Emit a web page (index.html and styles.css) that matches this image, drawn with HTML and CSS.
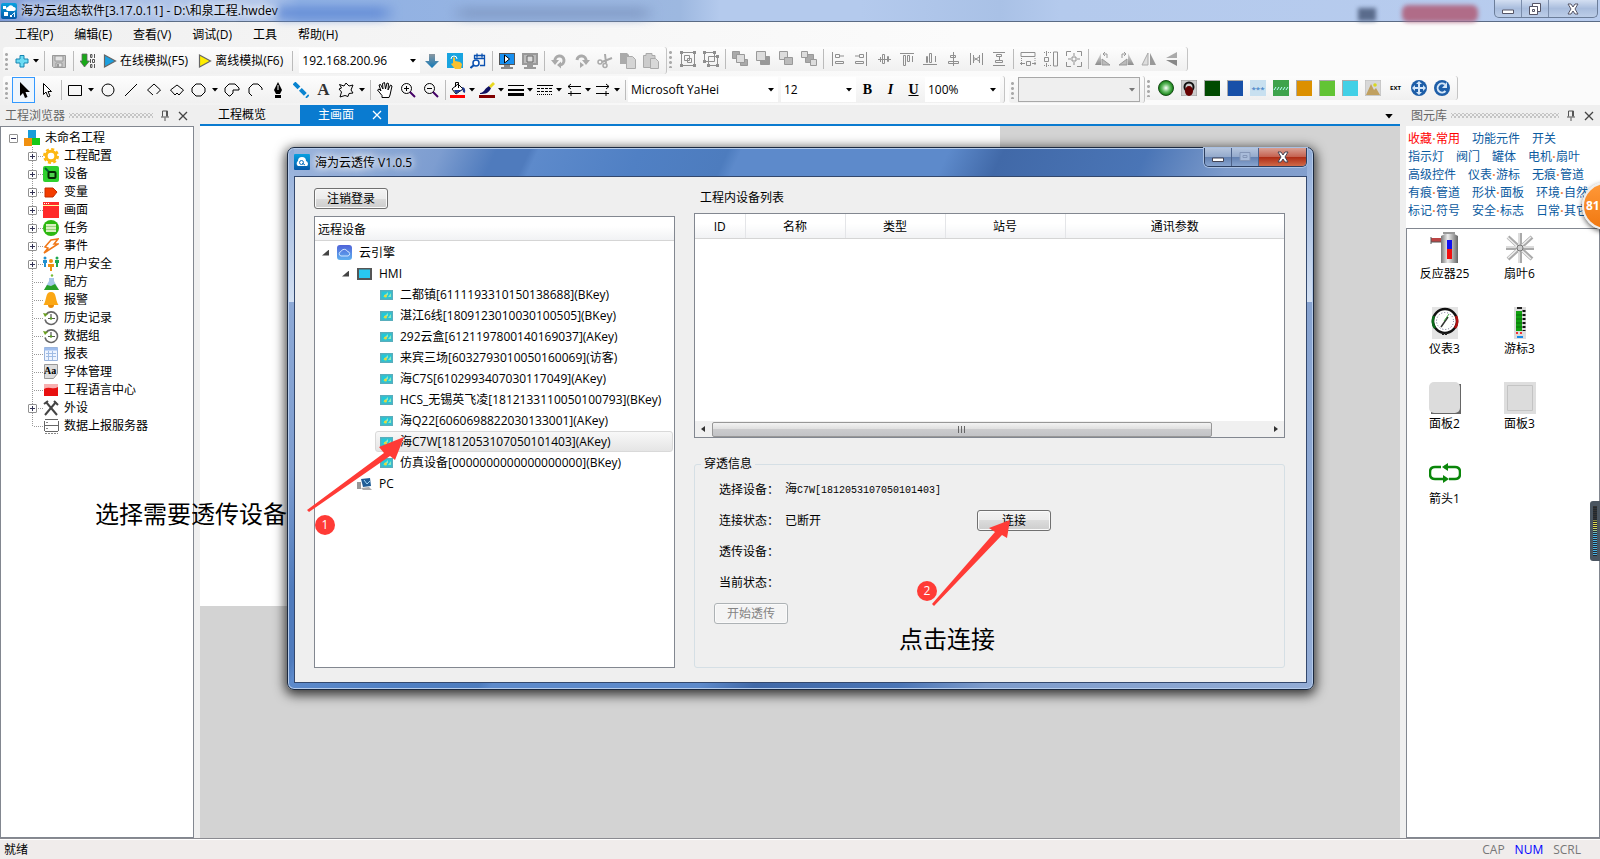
FILE: index.html
```html
<!DOCTYPE html>
<html lang="zh-CN">
<head>
<meta charset="utf-8">
<title>海为云组态软件</title>
<link rel="stylesheet" href="styles.css">
</head>
<body>
<svg class="defs" aria-hidden="true">
  <defs>
    <linearGradient id="gSteel" x1="0" x2="1"><stop offset="0" stop-color="#777"/><stop offset=".4" stop-color="#eee"/><stop offset="1" stop-color="#666"/></linearGradient>
    <linearGradient id="gGrey" x1="0" y1="0" x2="0" y2="1"><stop offset="0" stop-color="#ddd"/><stop offset="1" stop-color="#8c8c8c"/></linearGradient>
    <linearGradient id="gDown" x1="0" y1="0" x2="0" y2="1"><stop offset="0" stop-color="#8a97a0"/><stop offset="1" stop-color="#0f78b8"/></linearGradient>
    <linearGradient id="gBlue" x1="0" y1="0" x2="0" y2="1"><stop offset="0" stop-color="#08a0e0"/><stop offset="1" stop-color="#0558a8"/></linearGradient>
    <linearGradient id="gCloud" x1="0" y1="0" x2="0" y2="1"><stop offset="0" stop-color="#4f63d8"/><stop offset="1" stop-color="#5fb0f0"/></linearGradient>
    <radialGradient id="gLamp"><stop offset="0" stop-color="#fff"/><stop offset=".5" stop-color="#6cc06c"/><stop offset="1" stop-color="#0a7a0a"/></radialGradient>
  </defs>
  <symbol id="caret" viewBox="0 0 6 4"><path d="M0 0h6L3 3.5z" fill="currentColor"/></symbol>
  <symbol id="pin" viewBox="0 0 10 12"><path d="M2.500 6.500V1h5v5.500M6.500 1v5.500M1 7h8M5 7.500V11" fill="none" stroke="#555" stroke-width="1"/></symbol>
  <symbol id="close" viewBox="0 0 10 10"><path d="M1 1l8 8M9 1L1 9" stroke="currentColor" stroke-width="1.300"/></symbol>
  <symbol id="play" viewBox="0 0 16 16"><path d="M2.500 2l11 6-11 6z" fill="currentColor" stroke="#666" stroke-width="1.200"/></symbol>
  <symbol id="clock" viewBox="0 0 16 16"><path d="M3 4.500A6.300 6.300 0 1 1 2 9.500" fill="none" stroke="#666" stroke-width="1.600"/><path d="M0 3l2 4 3-3z" fill="#6aa020"/><path d="M8 4v5M5 8.500h7" stroke="#555" stroke-width="1.200"/><circle cx="8" cy="8.500" r="1.200" fill="#5aa020"/></symbol>
  <symbol id="device" viewBox="0 0 13 10"><path fill="#58aebc" d="M0 0h13v10H0z"/><path fill="#22c8d8" d="M1.500 1.500h10v7h-10z"/><path d="M3 7l5-5v3zM8 7l3-4v4z" fill="#8fe8c0"/><circle cx="5.500" cy="6" r="1.500" fill="#e8d83c"/></symbol>
</svg>

<div class="app">
  <header class="titlebar">
    <svg class="app-logo" viewBox="0 0 16 16"><rect width="16" height="16" rx="2" fill="url(#gBlue)"/><path fill="#fff" d="M7 8a2 2 0 0 1 0-4 3 3 0 0 1 5.500 0A2 2 0 0 1 13 8zM2 3h3v3H2zM3 9h4v4H3zM9 12h2v2H9z"/><path d="M11 12l2.500-2.500V14" fill="none" stroke="#dff2ff"/></svg>
    <h1 class="title-text">海为云组态软件[3.17.0.11] - D:\和泉工程.hwdev</h1>
    <span class="glass-tabs"></span><span class="glass-dark"></span><span class="glass-red"></span>
    <div class="win-buttons">
      <button aria-label="最小化"><svg width="12" height="12" viewBox="0 0 12 12"><path d="M.5 7h11v3.500H.5z" fill="#fff" stroke="#556"/></svg></button>
      <button aria-label="还原"><svg width="12" height="12" viewBox="0 0 12 12"><path d="M3.500.5h8v8h-3v-5h-5z" fill="#fff" stroke="#556"/><path d="M.5 3.500h8v8h-8zM3.500 6.500h2v2h-2z" fill="#fff" stroke="#556"/></svg></button>
      <button aria-label="关闭" class="wide"><svg width="12" height="12" viewBox="0 0 12 12"><path d="M1 1h3l2 3 2-3h3L8 6l3 5H8L6 8l-2 3H1l3-5z" fill="#fff" stroke="#556"/></svg></button>
    </div>
  </header>

  <nav class="menubar">
    <button>工程(P)</button><button>编辑(E)</button><button>查看(V)</button><button>调试(D)</button><button>工具</button><button>帮助(H)</button>
  </nav>

  <div class="toolrow">
    <div class="toolbar" role="toolbar" aria-label="标准">
      <i class="grip"></i>
      <button class="tb drop-s" aria-label="新建"><svg class="ic" viewBox="0 0 16 16"><path d="M6 2.500h4V6h4v4h-4v4H6v-4H2V6h4z" fill="#6cdcf4" stroke="#1784b0"/></svg><svg class="car"><use href="#caret"/></svg></button>
      <i class="sep"></i>
      <button class="tb" aria-label="保存"><svg class="ic" viewBox="0 0 16 16"><path d="M1.500 2.500h13v12h-12l-1-1z" fill="#c4c4c4" stroke="#999"/><path d="M4 3h8v5H4zM5 10h6v4H5z" fill="#e4e4e4" stroke="#999"/><path d="M6 11h2v3H6z" fill="#999"/></svg></button>
      <i class="sep"></i>
      <button class="tb" aria-label="下载编译"><svg class="ic" viewBox="0 0 16 16"><path d="M2 1h5v7h2.500L4.500 14 0 8h2z" fill="#18a818" stroke="#666" stroke-width=".8"/><path d="M10.500 1.500v3h1.500v-3zM14.500 1v4M10.500 6v4M12.500 6.500v3h2v-3zM10.500 11.500v3h1.500v-3zM14.500 11v4" stroke="#555" fill="none"/></svg></button>
      <button class="tb text"><svg class="ic play-b"><use href="#play"/></svg>在线模拟(F5)</button>
      <button class="tb text"><svg class="ic play-y"><use href="#play"/></svg>离线模拟(F6)</button>
      <i class="sep"></i>
      <span class="combo ip"><select aria-label="地址"><option>192.168.200.96</option></select><svg class="car"><use href="#caret"/></svg></span>
      <button class="tb" aria-label="下载"><svg class="ic" viewBox="0 0 16 16"><path d="M5 1h6v7h4l-7 7-7-7h4z" fill="url(#gDown)"/></svg></button>
      <button class="tb" aria-label="触摸"><svg class="ic" viewBox="0 0 16 16"><path fill="#18a4e0" d="M0 0h16v15H0z"/><path d="M6 4.500h2V8l5 1 2 2-1 5H8l-4-5 1.500-1L6 11z" fill="#f8c030"/><path d="M4 6a3 3 0 1 1 6 0" fill="none" stroke="#fff"/></svg></button>
      <button class="tb" aria-label="日程"><svg class="ic" viewBox="0 0 16 16"><path d="M4.500 6V2.500h10v10H10M4.500 5.500h10M7 .5v4M12 .5v4" fill="none" stroke="#0a50b0" stroke-width="1.300"/><circle cx="6" cy="10" r="3" fill="#fff" stroke="#0a50b0" stroke-width="1.500"/><path d="M4 12l-3.500 3" stroke="#0a50b0" stroke-width="2"/></svg></button>
      <i class="sep"></i>
      <button class="tb" aria-label="运行"><svg class="ic" viewBox="0 0 16 16"><path d="M0 0h16v12H0z" fill="#555"/><path d="M1 1h14v10H1z" fill="#1890f0"/><path d="M5.500 2l5 4-5 4z" fill="#fff" stroke="#000"/><path d="M5 12h6v2h3v2H2v-2h3z" fill="#888"/></svg></button>
      <button class="tb" aria-label="停止"><svg class="ic" viewBox="0 0 16 16"><path d="M0 0h16v12H0zM5 12h6v2h3v2H2v-2h3z" fill="#999"/><path d="M2 2h12v8H2z" fill="#bbb"/><path d="M5 3h6v6H5z" fill="#ddd" stroke="#666"/></svg></button>
      <i class="sep"></i>
      <button class="tb" aria-label="撤销"><svg class="ic" viewBox="0 0 16 16"><path d="M4 8a4.500 4.500 0 1 1 5 4" fill="none" stroke="#aaa" stroke-width="3"/><path d="M0 7h8l-4 5zM10 8.500v7L6 12z" fill="#aaa"/></svg></button>
      <button class="tb" aria-label="重做"><svg class="ic" viewBox="0 0 16 16"><path d="M12 8a4.500 4.500 0 1 0-9-1" fill="none" stroke="#aaa" stroke-width="3"/><path d="M16 7H8l4 5zM6 9v6l4-3z" fill="#aaa"/></svg></button>
      <button class="tb" aria-label="剪切"><svg class="ic" viewBox="0 0 16 16"><path d="M8 1l1 9M15 5L5 9" stroke="#aaa" stroke-width="2"/><circle cx="3" cy="9" r="2" fill="none" stroke="#aaa" stroke-width="1.500"/><circle cx="8" cy="12.500" r="2" fill="none" stroke="#aaa" stroke-width="1.500"/></svg></button>
      <button class="tb" aria-label="复制"><svg class="ic" viewBox="0 0 16 16"><path d="M0 0h7l2 2v9H0z" fill="#aaa"/><path d="M6.500 3.500h6l3 3v9h-9z" fill="#d4d4d4" stroke="#aaa"/></svg></button>
      <button class="tb" aria-label="粘贴"><svg class="ic" viewBox="0 0 16 16"><path d="M.5 2.500H3V.5h6v2h3v12H.5z" fill="#ccc" stroke="#aaa"/><path d="M7.500 5.500h5l3 3v7h-8z" fill="#d8d8d8" stroke="#aaa"/></svg></button>
    </div>
    <div class="toolbar raised" role="toolbar" aria-label="排列">
      <i class="grip"></i>
      <button class="tb" aria-label="组合"><svg class="ic ln" viewBox="0 0 16 16"><path d="M1.500 1.500h13v13h-13zM4.500 4.500h5v5h-5zM7.500 7.500h4v4h-4z"/><path class="fl" d="M0 0h3v3H0zM13 0h3v3h-3zM0 13h3v3H0zM13 13h3v3h-3z"/></svg></button>
      <button class="tb" aria-label="取消组合"><svg class="ic ln" viewBox="0 0 16 16"><path d="M1.500 1.500h10v9h-10zM5.500 5.500h9v9h-9z"/><path class="fl" d="M0 0h3v3H0zM10 0h3v3h-3zM0 9h3v3H0zM13 13h3v3h-3zM13 4h3v3h-3zM4 13h3v3H4z"/></svg></button>
      <i class="sep"></i>
      <button class="tb" aria-label="置顶"><svg class="ic" viewBox="0 0 16 16"><g stroke="#999"><path d="M.5.5h7v7h-7zM8.500 8.500h7v6h-7z" fill="#aaa"/><path d="M4.500 3.500h8v8h-8z" fill="#ddd"/></g></svg></button>
      <button class="tb" aria-label="上移"><svg class="ic" viewBox="0 0 16 16"><g stroke="#999"><path d="M5.500 5.500h9v8h-9z" fill="#999"/><path d="M1.500.5h9v9h-9z" fill="#ddd"/></g></svg></button>
      <button class="tb" aria-label="下移"><svg class="ic" viewBox="0 0 16 16"><g stroke="#999"><path d="M1.500.5h8v8h-8z" fill="#ddd"/><path d="M6.500 6.500h8v7h-8z" fill="#bbb"/></g></svg></button>
      <button class="tb" aria-label="置底"><svg class="ic" viewBox="0 0 16 16"><g stroke="#999"><path d="M4.500 3.500h8v8h-8z" fill="#aaa"/><path d="M.5.5h6v6h-6zM9.500 8.500h6v6h-6z" fill="#ddd"/></g></svg></button>
      <i class="sep"></i>
      <button class="tb" aria-label="左对齐"><svg class="ic ln" viewBox="0 0 16 16"><path d="M2.500 1v14M5.500 3.500h4v3h-4zM5.500 10.500h8v2h-8zM10 5h4"/></svg></button>
      <button class="tb" aria-label="右对齐"><svg class="ic ln" viewBox="0 0 16 16"><path d="M13.500 1v14M6.500 3.500h4v3h-4zM2.500 10.500h8v2h-8zM2 5h4"/></svg></button>
      <button class="tb" aria-label="水平居中"><svg class="ic ln" viewBox="0 0 16 16"><path d="M2 8.500h13M4.500 6v5M6.500 3.500h2v9h-2zM11.500 5.500h1v5h-1z"/></svg></button>
      <button class="tb" aria-label="顶对齐"><svg class="ic ln" viewBox="0 0 16 16"><path d="M1 2.500h14M4.500 4.500h2v10h-2zM8.500 4.500h2v6h-2zM13.500 5v6"/></svg></button>
      <button class="tb" aria-label="底对齐"><svg class="ic ln" viewBox="0 0 16 16"><path d="M1 13.500h14M4.500 5.500h1v6h-1zM7.500 2.500h2v9h-2zM13.500 5v6"/></svg></button>
      <button class="tb" aria-label="垂直居中"><svg class="ic ln" viewBox="0 0 16 16"><path d="M8.500 1v14M5.500 4.500h5v2h-5zM3.500 10.500h10v2h-10z"/></svg></button>
      <button class="tb" aria-label="横向等距"><svg class="ic ln" viewBox="0 0 16 16"><path d="M2.500 2v12M14.500 2v12M5.500 4v8M11.500 4v8M5 6l6 4M11 6l-6 4"/></svg></button>
      <button class="tb" aria-label="纵向等距"><svg class="ic ln" viewBox="0 0 16 16"><path d="M2 1.500h12M2 14.500h12M5.500 3.500h5v2h-5zM4.500 9.500h7v2h-7zM8.500 6v3"/></svg></button>
      <i class="sep"></i>
      <button class="tb" aria-label="同宽"><svg class="ic ln" viewBox="0 0 16 16"><path d="M1 1.500h14v4H1zM6.500 10.500h4v4h-4zM0 12.500h5M12 12.500h4"/><path d="M1.500 7v7M15 7v7" stroke-dasharray="1 1"/></svg></button>
      <button class="tb" aria-label="同高"><svg class="ic ln" viewBox="0 0 16 16"><path d="M10.500 1h4v14h-4zM1.500 6.500h4v4h-4zM3.500 0v5M3.500 12v4"/><path d="M1 1.500h8M1 14.500h8" stroke-dasharray="1 1"/></svg></button>
      <button class="tb" aria-label="同大小"><svg class="ic ln" viewBox="0 0 16 16"><path d="M.5 5V.5H5M11 .5h4.500V5M15.500 11v4.500H11M5 15.500H.5V11M6 6h4v4H6zM8 2v3M8 11v3M2 8h3M11 8h3"/></svg></button>
      <i class="sep"></i>
      <button class="tb" aria-label="左旋"><svg class="ic" viewBox="0 0 16 16"><path d="M0 14L6 2v12z" fill="url(#gGrey)"/><path d="M7 8l8 6H7z" fill="#bbb" stroke="#999"/><path d="M8 3h4v4M10 1L8 3l2 2" fill="none" stroke="#999"/></svg></button>
      <button class="tb" aria-label="右旋"><svg class="ic" viewBox="0 0 16 16"><path d="M16 14L10 2v12z" fill="url(#gGrey)"/><path d="M9 8l-8 6h8z" fill="#bbb" stroke="#999"/><path d="M8 3H4v4M6 1l2 2-2 2" fill="none" stroke="#999"/></svg></button>
      <button class="tb" aria-label="水平翻转"><svg class="ic" viewBox="0 0 16 16"><path d="M1 14L7 2v12z" fill="#ddd" stroke="#aaa"/><path d="M15 14L9 2v12z" fill="#999"/></svg></button>
      <button class="tb" aria-label="垂直翻转"><svg class="ic" viewBox="0 0 16 16"><path d="M13 1v6L2 7z" fill="#aaa"/><path d="M13 15V9H2z" fill="#888"/></svg></button>
    </div>
  </div>

  <div class="toolrow">
    <div class="toolbar" role="toolbar" aria-label="绘图">
      <i class="grip"></i>
      <button class="tb on" aria-label="选择"><svg class="ic" viewBox="0 0 16 16"><path d="M4 0v14l3-3 2 5 2.500-1-2-5H14z"/></svg></button>
      <button class="tb" aria-label="直接选择"><svg class="ic" viewBox="0 0 16 16"><path d="M4.500 1.500v11l2.500-2.500 2 5 2-1-2-4.500h3.500z" fill="#fff" stroke="#000"/></svg></button>
      <i class="sep"></i>
      <button class="tb drop" aria-label="矩形"><svg class="ic bk" viewBox="0 0 16 16"><path d="M1.500 3.500h13v10h-13z"/></svg><svg class="car"><use href="#caret"/></svg></button>
      <button class="tb" aria-label="圆"><svg class="ic bk" viewBox="0 0 16 16"><circle cx="8" cy="8" r="6"/></svg></button>
      <button class="tb" aria-label="直线"><svg class="ic bk" viewBox="0 0 16 16"><path d="M2 14L14 2"/></svg></button>
      <button class="tb" aria-label="折线"><svg class="ic bk" viewBox="0 0 16 16"><path d="M7 13L1.500 8 8 2l6.500 6-4 4"/></svg></button>
      <button class="tb" aria-label="多边形"><svg class="ic bk" viewBox="0 0 16 16"><path d="M8 3l6.500 5-4.500 5-2-2-2 2-4.500-5z"/></svg></button>
      <button class="tb drop" aria-label="八边形"><svg class="ic bk" viewBox="0 0 16 16"><path d="M5 2h5l4 4v4l-4 4H5l-4-4V6z"/></svg><svg class="car"><use href="#caret"/></svg></button>
      <button class="tb" aria-label="扇形"><svg class="ic bk" viewBox="0 0 16 16"><path d="M5 14L1 10V6l4-4h6l4 4v2H9v3l-3 3z"/></svg></button>
      <button class="tb" aria-label="弧"><svg class="ic bk" viewBox="0 0 16 16"><path d="M5 14l-3-3V6l4-4h5l4 4v2"/></svg></button>
      <button class="tb" aria-label="钢笔"><svg class="ic" viewBox="0 0 16 16"><path d="M8 0l4 8-2 4H6L4 8zM5 13h6v3H5z"/><path d="M8 3v5" stroke="#fff"/></svg></button>
      <button class="tb" aria-label="管道"><svg class="ic" viewBox="0 0 16 16"><path d="M1 1l14 14" stroke="#0a84d0" stroke-width="4" stroke-dasharray="7 2"/></svg></button>
      <button class="tb glyph a">A</button>
      <button class="tb drop" aria-label="星形"><svg class="ic bk" viewBox="0 0 16 16"><path d="M1.500 2.500L6 4l2-3 3 3 4-1-2 5 2 3-4 .5-1 3-3-1-5 1.500L3.500 10 1 7l2.500-1z"/></svg><svg class="car"><use href="#caret"/></svg></button>
      <i class="sep"></i>
      <button class="tb" aria-label="平移"><svg class="ic bk" viewBox="0 0 16 16"><path d="M5 15.500v-2L.5 8 2 7l2 2-2-6 1.500-.5L6 7 5.500 1.500 7.500.5 8.500 7l1.500-6 1.500.5L11 8l2.500-5 1.500 1-2 9-1 2.500z" fill="#fff"/></svg></button>
      <button class="tb" aria-label="放大"><svg class="ic bk" viewBox="0 0 16 16"><circle cx="6.500" cy="6.500" r="5"/><path d="M4 6.500h5M6.500 4v5"/><path d="M10 10l5 5" stroke="#406" stroke-width="2"/></svg></button>
      <button class="tb" aria-label="缩小"><svg class="ic bk" viewBox="0 0 16 16"><circle cx="6.500" cy="6.500" r="5"/><path d="M4 6.500h5"/><path d="M10 10l5 5" stroke="#406" stroke-width="2"/></svg></button>
      <i class="sep"></i>
      <button class="tb drop-s" aria-label="填充色"><svg class="ic" viewBox="0 0 16 16"><path d="M2 7l6-5 5 5-7 5z" fill="#fff" stroke="#000"/><path d="M4 8h8l-6 4zM12 5q4 0 3 6l-2-1z" fill="#223a90"/><path d="M5.500 5V.5h3V6" fill="none" stroke="#000"/><path d="M0 13h15v3H0z" fill="#f00"/></svg><svg class="car"><use href="#caret"/></svg></button>
      <button class="tb drop-s" aria-label="线条色"><svg class="ic" viewBox="0 0 16 16"><path d="M1 11c4 0 4-4 9-7l2 2c-2 5-5 6-11 6z" fill="#101060"/><path d="M10 4l4-4 2 2-4 4z" fill="#e8d820"/><path d="M0 13h16v3H0z" fill="#800000"/></svg><svg class="car"><use href="#caret"/></svg></button>
      <button class="tb drop-s" aria-label="线宽"><svg class="ic" viewBox="0 0 16 16"><path d="M0 3h16v1H0zM0 7h16v2H0zM0 11h16v3H0z"/></svg><svg class="car"><use href="#caret"/></svg></button>
      <button class="tb drop-s" aria-label="线型"><svg class="ic bk" viewBox="0 0 16 16"><path d="M0 3.500h16"/><path d="M0 6.500h16M0 9.500h16" stroke-dasharray="3 1"/><path d="M0 12.500h16" stroke-dasharray="1 1"/></svg><svg class="car"><use href="#caret"/></svg></button>
      <button class="tb drop-s" aria-label="起点箭头"><svg class="ic bk" viewBox="0 0 16 16"><path d="M2 4.500h13M5 2L2 4.500 5 7M2 11.500h13M5 9v5"/></svg><svg class="car"><use href="#caret"/></svg></button>
      <button class="tb drop-s" aria-label="终点箭头"><svg class="ic bk" viewBox="0 0 16 16"><path d="M1 4.500h13M11 2l3 2.500L11 7M1 11.500h13M11 9v5"/></svg><svg class="car"><use href="#caret"/></svg></button>
      <i class="sep"></i>
      <span class="combo font"><select aria-label="字体"><option>Microsoft YaHei</option></select><svg class="car"><use href="#caret"/></svg></span>
      <span class="combo size"><select aria-label="字号"><option>12</option></select><svg class="car"><use href="#caret"/></svg></span>
      <button class="tb glyph">B</button>
      <button class="tb glyph i">I</button>
      <button class="tb glyph u">U</button>
      <span class="combo size"><select aria-label="缩放"><option>100%</option></select><svg class="car"><use href="#caret"/></svg></span>
    </div>
    <div class="toolbar states" role="toolbar" aria-label="状态">
      <i class="grip"></i>
      <span class="combo state"><select aria-label="状态"><option></option></select><svg class="car"><use href="#caret"/></svg></span>
    </div>
    <div class="toolbar raised" role="toolbar" aria-label="图元">
      <i class="grip"></i>
      <button class="tb" aria-label="指示灯"><svg class="ic" viewBox="0 0 16 16"><circle cx="8" cy="8" r="7.500" fill="url(#gLamp)" stroke="#1b4d1b"/></svg></button>
      <button class="tb" aria-label="开关"><svg class="ic" viewBox="0 0 16 16"><path d="M0 0h16v16H0z" fill="#ccc" stroke="#999"/><circle cx="8" cy="7" r="4.500" fill="none" stroke="#111" stroke-width="2"/><ellipse cx="8" cy="11" rx="4" ry="5" fill="#600"/></svg></button>
      <button class="tb" aria-label="按钮"><span class="sw c1"></span></button>
      <button class="tb" aria-label="多态"><span class="sw c2"></span></button>
      <button class="tb" aria-label="数值"><span class="sw c3">***</span></button>
      <button class="tb" aria-label="趋势"><svg class="ic" viewBox="0 0 16 16"><path d="M0 0h16v16H0z" fill="#3ea34c"/><path d="M1 10l2-3M4 10l2-3M7 10l2-3M10 10l2-3M13 10l2-3" stroke="#bff"/></svg></button>
      <button class="tb" aria-label="报警条"><span class="sw c4"></span></button>
      <button class="tb" aria-label="配方"><span class="sw c5"></span></button>
      <button class="tb" aria-label="表格"><span class="sw c6"></span></button>
      <button class="tb" aria-label="图片"><svg class="ic" viewBox="0 0 16 16"><path d="M0 0h16v16H0z" fill="#d8d8d8" stroke="#bbb"/><path d="M1 15L6 4l3 6 2-2 4 7z" fill="#c0a060"/><circle cx="10" cy="5" r="1.800" fill="#d8d820"/></svg></button>
      <button class="tb tiny">EXT</button>
      <button class="tb" aria-label="移动"><svg class="ic" viewBox="0 0 16 16"><circle cx="8" cy="8" r="8" fill="#1d5ea8"/><path d="M8 1l3 3H9v3h3V5l3 3-3 3V9H9v3h2l-3 3-3-3h2V9H4v2L1 8l3-3v2h3V4H5z" fill="#d4e6f8"/></svg></button>
      <button class="tb" aria-label="旋转"><svg class="ic" viewBox="0 0 16 16"><circle cx="8" cy="8" r="8" fill="#1d5ea8"/><path d="M11.500 11A4.500 4.500 0 1 1 11 4.500" fill="none" stroke="#d4e6f8" stroke-width="2"/><path d="M13 2v6H8z" fill="#d4e6f8"/></svg></button>
    </div>
  </div>

  <main class="main">
    <aside class="dock">
      <div class="dock-head"><h2>工程浏览器</h2><i class="dots"></i><button aria-label="固定"><svg width="10" height="12"><use href="#pin"/></svg></button><button aria-label="关闭"><svg width="10" height="10"><use href="#close"/></svg></button></div>
      <div class="box">
        <ul class="tree">
          <li class="root"><i class="exp minus"></i><svg viewBox="0 0 16 16"><path d="M4 0h8v8H4z" fill="#189cd8"/><path d="M0 8h8v8H0z" fill="#f09010"/><path d="M8 8h8v7H8z" fill="#18c818"/></svg><span>未命名工程</span></li>
          <li><i class="exp"></i><svg viewBox="0 0 16 16"><circle cx="8" cy="8" r="6.800" fill="none" stroke="#fdb813" stroke-width="2.400" stroke-dasharray="3 2.340"/><circle cx="8" cy="8" r="4.800" fill="none" stroke="#fdb813" stroke-width="3"/></svg><span>工程配置</span></li>
          <li><i class="exp"></i><svg viewBox="0 0 16 16"><rect width="16" height="16" rx="2" fill="#2ed02e"/><path d="M2 2l4 4" stroke="#063" stroke-width="2"/><rect x="5.500" y="6" width="7" height="6" rx="1" fill="#4fd04f" stroke="#052b05" stroke-width="2"/></svg><span>设备</span></li>
          <li><i class="exp"></i><svg viewBox="0 0 16 16"><path d="M2 4h8l4 4-4 5H2z" fill="#f33c00" stroke="#c62c00"/></svg><span>变量</span></li>
          <li><i class="exp"></i><svg viewBox="0 0 16 16"><path d="M0 0h16v16H0z" fill="#ff2a2a"/><path d="M0 3.500h16" stroke="#ff9"/><path d="M1 1.500h5" stroke="#fff" stroke-dasharray="1 1"/></svg><span>画面</span></li>
          <li><i class="exp"></i><svg viewBox="0 0 16 16"><circle cx="8" cy="8" r="8" fill="#2cb810"/><path d="M3 4h10v8H3z" fill="#d8f0c0"/><path d="M3 6.500h10M3 9.500h10" stroke="#9ad080"/></svg><span>任务</span></li>
          <li><i class="exp"></i><svg viewBox="0 0 16 16"><path d="M8 2l7-1-4 5h4L1 15l4-5-3-1z" fill="#fff" stroke="#f07818" stroke-width="1.500"/></svg><span>事件</span></li>
          <li><i class="exp"></i><svg viewBox="0 0 16 16"><circle cx="2" cy="2" r="1.500" fill="#2090d0"/><path d="M0 4h4v3H3v4H1V7H0z" fill="#2090d0"/><circle cx="8" cy="5" r="2" fill="#f09010"/><path d="M5 8h6v3H9v4H7v-4H5z" fill="#f09010"/><circle cx="14" cy="2" r="1.500" fill="#20a850"/><path d="M12 4h4v3h-1v4h-2V7h-1z" fill="#20a850"/></svg><span>用户安全</span></li>
          <li class="leaf"><svg viewBox="0 0 16 16"><path d="M6 4h5v3l5 9H1l5-9z" fill="#a8c8e8"/><path d="M4 11l4 1 4-2 4 6H1z" fill="#28a028"/><circle cx="9" cy="1.500" r="1.200" fill="#7b3"/></svg><span>配方</span></li>
          <li class="leaf"><svg viewBox="0 0 16 16"><path d="M8 0c6 0 4 8 7.500 13H.5C4 8 2 0 8 0z" fill="#fba714"/><path d="M5 13a3 3 0 0 0 6 0z" fill="#e88a08"/></svg><span>报警</span></li>
          <li class="leaf"><svg><use href="#clock"/></svg><span>历史记录</span></li>
          <li class="leaf"><svg><use href="#clock"/></svg><span>数据组</span></li>
          <li class="leaf"><svg viewBox="0 0 16 16"><path d="M1.500 1.500h13v13h-13z" fill="#eef4ff" stroke="#9ab4dc"/><path d="M1 2h14v2.500H1z" fill="#9dbcec"/><path d="M3 7.500h10M3 10.500h10M5.500 5v9M9.500 5v9" stroke="#a0bce4"/></svg><span>报表</span></li>
          <li class="leaf"><svg class="aa" viewBox="0 0 16 16"><path d="M1.500.5h13v9l-4 5h-9z" fill="#ddd" stroke="#999"/><text x="1" y="10">Aa</text></svg><span>字体管理</span></li>
          <li class="leaf"><svg viewBox="0 0 16 16"><path d="M1 3h14v11H1z" fill="#e81010"/><path d="M1 2h14v3q-3 2-7 1T1 7z" fill="#f8b0b0"/></svg><span>工程语言中心</span></li>
          <li><i class="exp"></i><svg viewBox="0 0 16 16"><path d="M3 2l11 13M13 2L2 15" stroke="#444" stroke-width="2"/><path d="M1 4l4-3M11 1l4 4" stroke="#444" stroke-width="2"/></svg><span>外设</span></li>
          <li class="leaf"><svg viewBox="0 0 16 16"><path d="M2 1.500h13M1.500 3v10M2 7.500h13M15.500 3v10M2 13.500h13" stroke="#666" fill="none"/><path d="M3 4.500h3M3 10.500h3M2 15.500h13" stroke="#888" stroke-dasharray="2 1"/></svg><span>数据上报服务器</span></li>
        </ul>
      </div>
    </aside>

    <section class="center">
      <div class="tabs"><button class="tab">工程概览</button><button class="tab active">主画面<svg width="10" height="10"><use href="#close"/></svg></button><button class="tab-menu" aria-label="标签列表"><svg width="8" height="5"><use href="#caret"/></svg></button></div>
      <div class="canvas"><div class="page"></div></div>
    </section>

    <aside class="dock">
      <div class="dock-head"><h2>图元库</h2><i class="dots"></i><button aria-label="固定"><svg width="10" height="12"><use href="#pin"/></svg></button><button aria-label="关闭"><svg width="10" height="10"><use href="#close"/></svg></button></div>
      <div class="links">
        <p><a href="#" class="hot">收藏<b>·</b>常用</a><a href="#">功能元件</a><a href="#">开关</a></p>
        <p><a href="#">指示灯</a><a href="#">阀门</a><a href="#">罐体</a><a href="#">电机<b>·</b>扇叶</a></p>
        <p><a href="#">高级控件</a><a href="#">仪表<b>·</b>游标</a><a href="#">无痕<b>·</b>管道</a></p>
        <p><a href="#">有痕<b>·</b>管道</a><a href="#">形状<b>·</b>面板</a><a href="#">环境<b>·</b>自然</a></p>
        <p><a href="#">标记<b>·</b>符号</a><a href="#">安全<b>·</b>标志</a><a href="#">日常<b>·</b>其它</a></p>
      </div>
      <div class="box gallery">
        <figure><svg viewBox="0 0 32 32"><path d="M12 4q9-6 17 0v27H12z" fill="url(#gSteel)"/><path d="M14 1h12" stroke="#999" stroke-width="2"/><path d="M2 6h10v4H2z" fill="#b44"/><path d="M2 5v7M2 10h10" stroke="#555"/><path d="M18 8h5v19h-5z" fill="#f01010"/><path d="M18 8h5v9h-5z" fill="#1010f0"/></svg><figcaption>反应器25</figcaption></figure>
        <figure><svg viewBox="0 0 32 32"><g stroke="#aaa" stroke-width="4"><path d="M16 1v30M4 5l24 22M28 5L4 27M2 16h28"/></g><g stroke="#eee" stroke-width="1.500"><path d="M15 1v30M3 5l24 22M27 5L4 26M2 15h28"/></g><circle cx="16" cy="16" r="3" fill="#ccc" stroke="#777"/></svg><figcaption>扇叶6</figcaption></figure>
        <figure><svg viewBox="0 0 32 32"><path d="M3 0h26v32H3z" fill="#e4e4e4"/><circle cx="16" cy="14" r="12" fill="#fff" stroke="#111" stroke-width="2.500"/><path d="M6 21A12 12 0 0 1 5 9" fill="none" stroke="#0a6a1a" stroke-width="2.500"/><path d="M27 9a12 12 0 0 1-1 12" fill="none" stroke="#b01010" stroke-width="2.500"/><circle cx="16" cy="14" r="8.500" fill="none" stroke="#668" stroke-dasharray="1 2"/><path d="M12 20l7-10" stroke="#333" stroke-width="1.500"/><path d="M15 14l5-7" stroke="#4a4"/><path d="M13 27h6" stroke="#222" stroke-width="2" stroke-dasharray="2 1"/></svg><figcaption>仪表3</figcaption></figure>
        <figure><svg viewBox="0 0 32 32"><path d="M10 0h12v32H10z" fill="#ddd"/><path d="M12 4h6v20h-6z" fill="#10a010"/><path d="M12 8h6M12 12h6M12 16h6M12 20h6" stroke="#087008"/><path d="M20 3v21" stroke="#111" stroke-width="3" stroke-dasharray="2 2"/><path d="M12 26h2M16 26h2" stroke="#e33" stroke-width="2"/><path d="M13 30h6" stroke="#1888e8" stroke-width="2"/><path d="M13 1h5" stroke="#222" stroke-width="2"/></svg><figcaption>游标3</figcaption></figure>
        <figure><svg viewBox="0 0 32 32"><path d="M2 2h30v30H2z" fill="#666"/><rect width="31" height="31" rx="5" fill="#dcdcdc"/></svg><figcaption>面板2</figcaption></figure>
        <figure><svg viewBox="0 0 32 32"><path d="M0 0h32v32H0z" fill="#dedede"/><path d="M3.500 3.500h25v25h-25z" fill="#dcdcdc" stroke="#c4c4c4"/></svg><figcaption>面板3</figcaption></figure>
        <figure><svg viewBox="0 0 32 32"><path d="M12 10H6q-5 0-5 5v2q0 5 5 5h11M20 22h6q5 0 5-5v-2q0-5-5-5H15" fill="none" stroke="#0a860a" stroke-width="2.500"/><path d="M19 6l-6 4 6 4zM14 18l6 4-6 4z" fill="#0a860a"/></svg><figcaption>箭头1</figcaption></figure>
      </div>
    </aside>
  </main>

  <footer class="status"><span>就绪</span><span class="keys"><span>CAP</span><span class="num">NUM</span><span>SCRL</span></span></footer>

  <section class="dialog" role="dialog" aria-labelledby="dlg-title">
    <header class="dlg-title">
      <svg width="16" height="16" viewBox="0 0 16 16"><rect width="16" height="16" rx="1" fill="url(#gBlue)"/><path d="M4 12a3 3 0 0 1 0-5 4 4 0 0 1 8 0 3 3 0 0 1 1 5z" fill="#fff"/><circle cx="7.500" cy="8.500" r="2" fill="none" stroke="#0a70c0"/><path d="M8 9l3 2" stroke="#0a70c0"/></svg>
      <h2 id="dlg-title">海为云透传 V1.0.5</h2>
      <div class="dlg-buttons">
        <button aria-label="最小化"><svg width="12" height="12" viewBox="0 0 12 12"><path d="M.5 7h11v3.500H.5z" fill="#fff" stroke="#445"/></svg></button>
        <button aria-label="最大化" disabled><svg width="12" height="12" viewBox="0 0 12 12"><path d="M1 1.500h10v8H1zM4 4.500h4v2H4z" fill="#a9bcda" stroke="#8597b8"/></svg></button>
        <button aria-label="关闭" class="red"><svg width="12" height="12" viewBox="0 0 12 12"><path d="M1 1h3l2 3 2-3h3L8 6l3 5H8L6 8l-2 3H1l3-5z" fill="#fff" stroke="#445"/></svg></button>
      </div>
    </header>
    <div class="client">
      <div class="col-tree">
        <button class="btn">注销登录</button>
        <div class="remote">
          <div class="rem-head">远程设备</div>
          <ul>
            <li class="l0"><i class="tri"></i><svg width="15" height="15" viewBox="0 0 15 15"><rect width="15" height="15" rx="3" fill="url(#gCloud)"/><path d="M4 11a2.300 2.300 0 0 1 0-4.500 3.500 3.500 0 0 1 6.500 0A2.300 2.300 0 0 1 11 11z" fill="none" stroke="#cfe6ff"/></svg><span>云引擎</span></li>
            <li class="l1"><i class="tri"></i><svg width="15" height="12" viewBox="0 0 15 12"><path d="M0 0h15v12H0z" fill="#555"/><path d="M2 1.500h11v8.500H2z" fill="#28c8f0"/></svg><span>HMI</span></li>
            <li class="l2"><svg width="13" height="10"><use href="#device"/></svg><span>二都镇[6111193310150138688](BKey)</span></li>
            <li class="l2"><svg width="13" height="10"><use href="#device"/></svg><span>湛江6线[1809123010030100505](BKey)</span></li>
            <li class="l2"><svg width="13" height="10"><use href="#device"/></svg><span>292云盒[6121197800140169037](AKey)</span></li>
            <li class="l2"><svg width="13" height="10"><use href="#device"/></svg><span>来宾三场[6032793010050160069](访客)</span></li>
            <li class="l2"><svg width="13" height="10"><use href="#device"/></svg><span>海C7S[6102993407030117049](AKey)</span></li>
            <li class="l2"><svg width="13" height="10"><use href="#device"/></svg><span>HCS_无锡英飞凌[1812133110050100793](BKey)</span></li>
            <li class="l2"><svg width="13" height="10"><use href="#device"/></svg><span>海Q22[6060698822030133001](AKey)</span></li>
            <li class="l2 sel"><svg width="13" height="10"><use href="#device"/></svg><span>海C7W[1812053107050101403](AKey)</span></li>
            <li class="l2"><svg width="13" height="10"><use href="#device"/></svg><span>仿真设备[0000000000000000000](BKey)</span></li>
            <li class="l1 pc"><svg width="15" height="12" viewBox="0 0 15 12"><path d="M0 4h4v7H0z" fill="#999"/><path d="M4 1l9-1 1 8-8 1z" fill="#1f5d96"/><path d="M7 2l3 4 3-3" fill="none" stroke="#9fd4f4"/><path d="M4 10l8-1 3 3H6z" fill="#aaa"/></svg><span>PC</span></li>
          </ul>
        </div>
      </div>
      <div class="col-info">
        <h3>工程内设备列表</h3>
        <div class="grid">
          <table>
            <colgroup><col class="w-id"><col class="w-mid"><col class="w-mid"><col class="w-st"><col></colgroup>
            <thead><tr><th>ID</th><th>名称</th><th>类型</th><th>站号</th><th>通讯参数</th></tr></thead>
            <tbody></tbody>
          </table>
          <div class="hscroll"><i class="arr l"></i><div class="track"><div class="thumb"><i></i></div></div><i class="arr r"></i></div>
        </div>
        <fieldset>
          <legend>穿透信息</legend>
          <dl>
            <div><dt>选择设备：</dt><dd>海<span class="mono">C7W[1812053107050101403]</span></dd></div>
            <div><dt>连接状态：</dt><dd>已断开</dd><dd><button class="btn">连接</button></dd></div>
            <div><dt>透传设备：</dt><dd></dd></div>
            <div><dt>当前状态：</dt><dd></dd></div>
          </dl>
          <button class="btn start" disabled>开始透传</button>
        </fieldset>
      </div>
    </div>
  </section>

  <p class="note n1">选择需要透传设备</p>
  <p class="note n2">点击连接</p>
  <svg class="arrow a1" width="100" height="76" viewBox="0 0 100 76"><path d="M0 73L77 16 72 10 97 0 88 23 83 19 2 75z" fill="#ff3b36"/></svg>
  <svg class="arrow a2" width="80" height="86" viewBox="0 0 80 86"><path d="M0 84L63 12 57 8 78 0 75 18 70 15 2 86z" fill="#ff3b36"/></svg>
  <span class="badge b1">1</span>
  <span class="badge b2">2</span>
  <span class="float-ball">81</span>
  <span class="meter"><i></i></span>
</div>
</body>
</html>
```
FILE: styles.css
```css
* { box-sizing: border-box; }
html, body { margin: 0; height: 100%; }
body {
  font: 12px/18px "Open Sans", "Noto Sans CJK SC", sans-serif;
  color: #000;
  background: #efefef;
}
h1, h2, h3, p, ul, dl, dd, figure { margin: 0; padding: 0; font-size: 12px; font-weight: 400; }
ul { list-style: none; }
i { font-style: normal; }
button, select { font: inherit; color: inherit; }
button { margin: 0; padding: 0; border: 0; background: none; }
svg { flex: none; display: block; }
.defs { position: absolute; width: 0; height: 0; }

.app {
  position: relative;
  display: flex;
  flex-direction: column;
  min-height: 100vh;
  overflow: hidden;
}

/* title bar */
.titlebar {
  display: flex;
  align-items: flex-start;
  height: 22px;
  padding-left: 1px;
  border-bottom: 1px solid #5a6b85;
  background: linear-gradient(90deg, #7f9bd6 0, #a9bfe6 100px, #b6c9ea 260px, #8fb0e4 300px, #9db8e0 680px, #b4caed 720px, #b4caed 860px, #a9c1e6 1000px, #b4caed 1060px, #b8ccee 100%);
}
.app-logo { width: 16px; height: 16px; margin-top: 3px; }
.title-text { margin: 2px 0 0 4px; text-shadow: 0 0 6px #fff, 0 0 8px #fff; white-space: nowrap; }
.glass-tabs { flex: 1; height: 14px; margin-top: 6px; background: linear-gradient(90deg, #5c86d4 0, #5c86d4 100px, transparent 120px, transparent 170px, #8099c4 190px, #8099c4 360px, transparent 380px); filter: blur(4px); opacity: .7; }
.glass-dark { width: 18px; height: 13px; margin: 8px 26px 0 0; background: #5a6b8c; filter: blur(2px); }
.glass-red { width: 76px; height: 17px; margin: 5px 16px 0 0; border-radius: 6px; background: #b06c88; filter: blur(2px); }
.win-buttons { display: flex; height: 18px; margin-right: 2px; border: 1px solid #6b7d99; border-top: 0; border-radius: 0 0 5px 5px; background: linear-gradient(#d3dff2, #a9bddd 50%, #bccde8); }
.win-buttons button { display: grid; place-items: center; width: 27px; border-right: 1px solid #7b8dab; }
.win-buttons .wide { width: 48px; border-right: 0; }

/* menu and tool bars */
.menubar, .toolrow { background: linear-gradient(90deg, #f0f0f0, #fbfbfb 60%); }
.menubar { display: flex; gap: 21px; height: 25px; padding-left: 15px; align-items: center; }
.toolrow { display: flex; align-items: flex-start; height: 29px; padding-left: 3px; }
.toolbar {
  display: flex;
  align-items: center;
  height: 27px;
  padding-right: 4px;
  border-right: 1px solid #c4c4c4;
  border-radius: 3px;
  background: linear-gradient(#fdfdfd, #f0f0f0);
}
.toolbar.raised { height: 24px; }
.grip { width: 9px; height: 18px; background: radial-gradient(circle, #aaa 1px, transparent 2px) 2px 0 / 3px 5px repeat-y; }
.sep { width: 6px; height: 20px; background: linear-gradient(#bbb, #bbb) center / 1px 100% no-repeat; }
.tb { display: flex; align-items: center; justify-content: center; width: 23px; height: 26px; white-space: nowrap; }
.tb.on { border: 1px solid #3399ff; background: #eef6fd; }
.ic { width: 16px; height: 16px; }
.ic.ln { fill: none; stroke: #8f8f8f; }
.ic.ln .fl { fill: #8f8f8f; stroke: none; }
.ic.bk { fill: none; stroke: #000; }
.car { width: 6px; height: 4px; color: #000; }
.drop { width: 32px; gap: 5px; }
.drop-s { width: 29px; gap: 3px; }
.text { width: auto; gap: 2px; padding: 0 6px 0 3px; }
.play-b { color: #1ba0e0; }
.play-y { color: #ffee00; }
.glyph { font: 700 14px/26px "Liberation Serif", serif; }
.glyph.a { font-size: 17px; color: #333; }
.glyph.i { font-style: italic; }
.glyph.u { text-decoration: underline; }
.tiny { font-size: 6px; font-weight: 700; }
.combo { display: flex; align-items: center; height: 25px; padding-right: 3px; background: #fff; }
.combo select { flex: 1; min-width: 0; height: 100%; padding: 0 0 0 3px; border: 0; background: none; appearance: none; }
.combo .car { margin-right: 1px; }
.ip { width: 121px; margin-left: 4px; }
.font { width: 150px; margin-right: 3px; }
.size { width: 75px; }
.states { margin-left: 4px; }
.state { width: 122px; border: 1px solid #a8a8a8; background: #efefef; }
.state .car { color: #777; }
.sw { width: 16px; height: 16px; border: 1px solid #aaa; border-width: 1px 0 0 1px; font-size: 8px; line-height: 16px; text-align: center; }
.c1 { background: #004a00; }
.c2 { background: #1850a8; }
.c3 { background: #c8e0f0; color: #2a70c0; border-color: #c8e0f0; }
.c4 { background: #dc9000; }
.c5 { background: #62c435; }
.c6 { background: #42d0e6; }

/* work area */
.main { flex: 1; display: flex; gap: 6px; }
.dock { display: flex; flex-direction: column; width: 194px; }
.dock-head { display: flex; align-items: center; gap: 4px; height: 21px; padding: 0 5px; color: #666; }
.dock-head h2 { padding-top: 1px; }
.dock-head button { width: 12px; display: grid; place-items: center; margin-left: 2px; color: #444; }
.dots { flex: 1; height: 5px; background: radial-gradient(circle, #aaa 0, #aaa 1px, transparent 1px) 0 0 / 4px 4px, radial-gradient(circle, #aaa 0, #aaa 1px, transparent 1px) 2px 2px / 4px 4px; opacity: .6; }
.box { flex: 1; border: 1px solid #828790; background: #fff; }
.center { flex: 1; display: flex; flex-direction: column; min-width: 0; }
.tabs { display: flex; height: 21px; border-bottom: 2px solid #0a7bd0; }
.tab { display: flex; align-items: center; gap: 18px; padding: 1px 18px 0; }
.tab.active { margin-left: 16px; padding-right: 6px; background: #0a7bd0; color: #fff; }
.tab-menu { margin-left: auto; padding: 4px 7px 0 0; }
.canvas { flex: 1; background: #d3d3d3; }
.page { width: 800px; height: 480px; background: #fff; }

.tree { padding-top: 2px; }
.tree li { display: flex; align-items: center; height: 18px; padding-left: 27px; background: repeating-linear-gradient(#999 0, #999 1px, transparent 1px, transparent 2px) 31px 0 / 1px 100% no-repeat, repeating-linear-gradient(90deg, #999 0, #999 1px, transparent 1px, transparent 2px) 33px 9px / 9px 1px no-repeat; }
.tree li:last-child { background-size: 1px 9px, 9px 1px; }
.tree .root { padding-left: 8px; background: none; }
.tree svg { width: 16px; height: 16px; margin: 0 5px 0 6px; }
.tree .leaf { padding-left: 36px; }
.aa text { font: 700 10px "Liberation Serif", serif; }
.exp { width: 9px; height: 9px; border: 1px solid #919191; border-radius: 1px; background: linear-gradient(#335, #335) center / 5px 1px no-repeat, linear-gradient(#335, #335) center / 1px 5px no-repeat, #fff; }
.exp.minus { background: linear-gradient(#335, #335) center / 5px 1px no-repeat, #fff; }

.links { height: 102px; padding: 4px 0 0 2px; background: #fff; overflow: hidden; }
.links p { display: flex; gap: 12px; height: 18px; white-space: nowrap; }
.links a { color: #0a5aa0; text-decoration: none; }
.links a.hot { color: #f00; }
.links b { display: inline-block; width: 4px; color: #f08040; text-align: center; }
.gallery { display: grid; grid-template-columns: 75px 75px; grid-auto-rows: 75px; }
.gallery figure { display: flex; flex-direction: column; align-items: center; padding-top: 3px; }
.gallery svg { width: 32px; height: 32px; }
.gallery figcaption { margin-top: 1px; }

.status { display: flex; justify-content: space-between; height: 20px; margin-top: 1px; padding: 1px 19px 0 4px; border-top: 1px solid #fff; background: #f0eceb; box-shadow: 0 -1px #8a8a90; line-height: 18px; }
.keys { display: flex; gap: 10px; color: #777; }
.num { color: #00f; }

/* remote connection dialog */
.dialog {
  position: absolute;
  left: 287px;
  right: 286px;
  top: 147px;
  padding: 0 6px 6px;
  border: 1px solid #1b2940;
  border-radius: 7px;
  background:
    linear-gradient(#8fabd8, #d3e0f2 154px, transparent 154px) 0 0 / 6px 100% no-repeat,
    linear-gradient(#8fabd8, #d3e0f2 154px, transparent 154px) 100% 0 / 6px 100% no-repeat,
    linear-gradient(115deg, #9db5dc 0, #7d9dd0 140px, #4f7bbd 190px, #4f7bbd 220px, #5d8acb 228px, #5080c4 320px, #4d7cbe 400px, #5d8acb 412px, #5d8acb 600px, #4169a8 650px, #4a75b6 780px, #7d9bcb 860px, #94add6 100%);
  box-shadow: 0 3px 12px 2px rgba(0, 0, 0, .75), inset 0 0 0 1px #b5cbea;
}
.dlg-title { display: flex; gap: 5px; height: 28px; }
.dlg-title > svg { margin-top: 6px; }
.dlg-title h2 { flex: 1; margin-top: 6px; text-shadow: 0 0 6px #fff, 0 0 8px #fff, 0 0 12px #fff; }
.dlg-buttons { display: flex; height: 19px; border: 1px solid #2d3f60; border-top: 0; border-radius: 0 0 5px 5px; overflow: hidden; box-shadow: 0 0 0 1px #a9c0e2; }
.dlg-buttons button { display: grid; place-items: center; width: 27px; border-right: 1px solid #4c628a; background: linear-gradient(#b5c5de, #93a9cb 50%, #6280b0 50%, #88a4cf); }
.dlg-buttons .red { width: 47px; border-right: 0; background: linear-gradient(#d9a094, #c5604e 50%, #ad2a14 50%, #d06a48); }
.client { display: flex; gap: 19px; height: 507px; padding: 11px 21px 14px 19px; border: 1px solid #33486d; background: #efefef; }
.col-tree { display: flex; flex-direction: column; align-items: flex-start; gap: 7px; width: 361px; }
.btn { width: 74px; height: 21px; border: 1px solid #707070; border-radius: 3px; background: linear-gradient(#f3f3f3, #ebebeb 50%, #dcdcdc 50%, #cdcdcd); box-shadow: inset 0 0 0 1px #fafafa; line-height: 19px; }
.btn:disabled { border-color: #adb2b5; color: #838383; background: #f4f4f4; }
.remote { flex: 1; width: 100%; border: 1px solid #828790; background: #fff; }
.rem-head { height: 24px; padding: 4px 3px 0; border-bottom: 1px solid #d5d5d5; background: linear-gradient(#fff 40%, #f1f2f4); }
.remote li { display: flex; align-items: center; gap: 7px; height: 21px; white-space: nowrap; }
.remote ul { padding-top: 1px; }
.l0 { padding-left: 7px; }
.l1 { padding-left: 27px; }
.remote .l1.pc { padding-left: 42px; }
.remote .l2 { margin-left: 60px; margin-right: 1px; padding-left: 4px; border: 1px solid transparent; }
.remote .sel { border: 1px solid #d9d9d9; border-radius: 3px; background: linear-gradient(#f8f8f8, #e5e5e5); }
.tri { width: 7px; height: 6px; margin-right: 1px; background: #444; clip-path: polygon(100% 0, 100% 100%, 0 100%); }

.col-info { flex: 1; display: flex; flex-direction: column; min-width: 0; }
.col-info h3 { padding: 1px 0 6px 6px; }
.grid { display: flex; flex-direction: column; height: 225px; border: 1px solid #828790; background: #fff; }
table { width: 100%; border-collapse: collapse; table-layout: fixed; }
th { height: 24px; padding: 2px 0 0; border-right: 1px solid #e4e5e8; border-bottom: 1px solid #d5d5d5; background: linear-gradient(#fff 40%, #f1f2f4); font-weight: 400; }
th:last-child { border-right: 0; }
.w-id { width: 50px; }
.w-mid { width: 100px; }
.w-st { width: 120px; }
.hscroll { display: flex; align-items: center; gap: 7px; height: 16px; margin-top: auto; padding: 0 6px; background: #f0f0f0; }
.track { flex: 1; height: 15px; }
.thumb { display: grid; place-items: center; width: 90%; height: 15px; border: 1px solid #979797; border-radius: 2px; background: linear-gradient(#f3f3f3, #e0e0e0 45%, #cbcbcd 50%, #c2c3c6); }
.thumb i { width: 7px; height: 7px; background: repeating-linear-gradient(90deg, #666 0, #666 1px, transparent 1px, transparent 3px); }
.arr { border: 3px solid transparent; }
.arr.l { border-right: 4px solid #333; border-left: 0; }
.arr.r { border-left: 4px solid #333; border-right: 0; }
fieldset { flex: 1; margin: 17px 0 0; padding: 0; min-width: 0; border: 1px solid #d5dfe5; border-radius: 3px; }
legend { margin-left: 6px; padding: 0 3px; line-height: 18px; }
dl { padding: 1px 0 0 24px; }
dl > div { display: grid; grid-template-columns: 66px 192px auto 1fr; align-items: center; height: 31px; }
.mono { font: 10px/18px "Liberation Mono", monospace; }
.start { display: block; margin: 5px 0 0 19px; }

/* annotations over the window */
.note { position: absolute; font-size: 24px; line-height: 32px; white-space: nowrap; }
.n1 { left: 95px; top: 498px; }
.n2 { left: 899px; top: 623px; }
.arrow { position: absolute; }
.a1 { left: 307px; top: 437px; }
.a2 { left: 932px; top: 520px; }
.badge { position: absolute; width: 20px; height: 20px; border-radius: 50%; background: #ff3b36; color: #fff; text-align: center; line-height: 20px; }
.b1 { left: 315px; top: 515px; }
.b2 { left: 917px; top: 581px; }
.float-ball { position: absolute; right: -30px; top: 182px; width: 48px; height: 48px; padding-left: 2px; border: 2px solid #eee; border-radius: 50%; background: linear-gradient(#ff9838, #f07810); color: #fff; font-weight: 700; line-height: 44px; box-shadow: 0 2px 5px rgba(0, 0, 0, .6); }
.meter { position: absolute; right: 0; top: 501px; width: 10px; height: 60px; padding: 5px 3px; border-radius: 3px 0 0 3px; background: #4a5560; }
.meter i { display: block; height: 50px; background: repeating-linear-gradient(transparent 0, transparent 1px, #22282e 1px, #22282e 2px), linear-gradient(#333 14px, #e0d850 15px, #e0d850 22px, #4ab0e0 28px); }
```
